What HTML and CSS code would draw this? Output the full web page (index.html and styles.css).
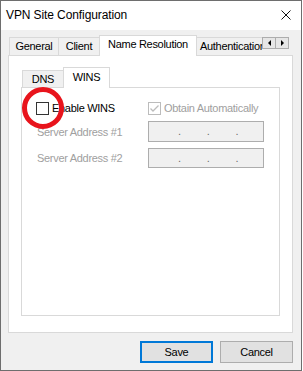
FILE: index.html
```html
<!DOCTYPE html>
<html lang="en">
<head>
    <meta charset="UTF-8">
    <title>VPN Site Configuration</title>
    <link rel="stylesheet" href="styles.css">
</head>
<body>
    <div class="window">
        <div class="titlebar">
            <span class="title">VPN Site Configuration</span>
            <svg class="close" width="10" height="10" viewBox="0 0 10 10">
                <path d="M0.5 0.5 L9.5 9.5 M9.5 0.5 L0.5 9.5" stroke="#111" stroke-width="1" fill="none"/>
            </svg>
        </div>
        <div class="content">
            <div class="tabs">
                <div class="tab tab-general">General</div>
                <div class="tab tab-client">Client</div>
                <div class="tab tab-name active">Name Resolution</div>
                <div class="tab tab-auth">Authentication</div>
                <div class="scroller">
                    <span class="arrow left"></span>
                    <span class="arrow right"></span>
                </div>
            </div>
            <div class="panel">
                <div class="subtabs">
                    <div class="subtab tab-dns">DNS</div>
                    <div class="subtab tab-wins active">WINS</div>
                </div>
                <div class="subpanel">
                    <div class="wins">
                        <label class="check">
                            <span class="box"></span>
                            <span>Enable WINS</span>
                        </label>
                        <label class="check disabled">
                            <span class="box">
                                <svg width="11" height="11" viewBox="0 0 11 11">
                                    <path d="M1.5 5.5 L4 8 L9.5 2.5" stroke="#bcbcbc" stroke-width="1.3" fill="none"/>
                                </svg>
                            </span>
                            <span>Obtain Automatically</span>
                        </label>
                        <span class="label">Server Address #1</span>
                        <div class="ip"><span>.</span><span>.</span><span>.</span></div>
                        <span class="label">Server Address #2</span>
                        <div class="ip"><span>.</span><span>.</span><span>.</span></div>
                    </div>
                    <div class="marker"></div>
                </div>
            </div>
            <div class="buttons">
                <button class="btn default">Save</button>
                <button class="btn">Cancel</button>
            </div>
        </div>
    </div>
</body>
</html>
```

FILE: styles.css
```css
body {
    margin: 0;
    font-family: "Liberation Sans", Arial, sans-serif;
    font-size: 11px;
    letter-spacing: -0.3px;
    color: #000;
    background: #fff;
}
.window {
    box-sizing: border-box;
    width: 302px;
    height: 371px;
    border: 1px solid #6e6e6e;
    background: #f0f0f0;
    display: flex;
    flex-direction: column;
}
.titlebar {
    height: 29px;
    background: #fff;
    display: flex;
    align-items: center;
    justify-content: space-between;
    padding: 0 10px 0 5px;
}
.title {
    font-size: 12px;
    letter-spacing: -0.1px;
    margin-top: -1px;
}
.close {
    margin-top: -1px;
}
.content {
    flex: 1;
    display: flex;
    flex-direction: column;
    padding: 5px 8px 7px 7px;
}
.tabs {
    display: flex;
    height: 20px;
    padding-left: 1px;
    position: relative;
    z-index: 1;
}
.tab {
    box-sizing: border-box;
    height: 18px;
    margin-top: 2px;
    border: 1px solid #d9d9d9;
    border-bottom: none;
    border-right: none;
    background: #f0f0f0;
    text-align: center;
    line-height: 17px;
    white-space: nowrap;
    overflow: hidden;
}
.tab-general { width: 49px; }
.tab-client { width: 41px; }
.tab-name { width: 98px; }
.tab-auth {
    width: 65px;
    text-align: left;
    padding-left: 3px;
}
.tab.active {
    height: 21px;
    margin-top: 0;
    background: #fff;
    border-right: 1px solid #d9d9d9;
    line-height: 17px;
}
.tab.active + .tab {
    border-left: none;
}
.scroller {
    display: flex;
    margin-top: 2px;
    height: 12px;
}
.arrow {
    box-sizing: border-box;
    width: 14px;
    height: 12px;
    border: 1px solid #adadad;
    background: #e6e6e6;
    display: flex;
    align-items: center;
    justify-content: center;
}
.arrow + .arrow {
    border-left: none;
    width: 13px;
}
.arrow.left::before {
    content: "";
    border-right: 3px solid #000;
    border-top: 3px solid transparent;
    border-bottom: 3px solid transparent;
}
.arrow.right::before {
    content: "";
    border-left: 3px solid #000;
    border-top: 3px solid transparent;
    border-bottom: 3px solid transparent;
}
.panel {
    flex: 1;
    background: #fff;
    border: 1px solid #d9d9d9;
    padding: 11px 12px 16px 12px;
    display: flex;
    flex-direction: column;
}
.subtabs {
    display: flex;
    height: 20px;
    padding-left: 1px;
    position: relative;
    z-index: 1;
}
.subtab {
    box-sizing: border-box;
    height: 17px;
    margin-top: 3px;
    border: 1px solid #d9d9d9;
    border-bottom: none;
    background: #f0f0f0;
    text-align: center;
    line-height: 17px;
}
.tab-dns {
    width: 41px;
    border-right: none;
}
.tab-wins { width: 47px; }
.subtab.active {
    height: 21px;
    margin-top: 0;
    background: #fff;
    line-height: 18px;
}
.subpanel {
    flex: 1;
    border: 1px solid #d9d9d9;
    position: relative;
}
.wins {
    display: grid;
    grid-template-columns: 112px 116px;
    grid-template-rows: 13px 21px 20px;
    row-gap: 6px;
    align-items: center;
    padding: 14px 0 0 14px;
}
.check {
    display: flex;
    align-items: center;
    gap: 3px;
    line-height: 13px;
    white-space: nowrap;
}
.box {
    box-sizing: border-box;
    width: 13px;
    height: 13px;
    border: 1px solid #333;
    background: #fff;
    display: flex;
    align-items: center;
    justify-content: center;
}
.disabled {
    color: #a0a0a0;
}
.disabled .box {
    border-color: #bcbcbc;
}
.label {
    color: #a0a0a0;
    padding-left: 1px;
}
.ip {
    box-sizing: border-box;
    height: 100%;
    border: 1px solid #adadad;
    background: #f0f0f0;
    color: #6d6d6d;
    display: flex;
    gap: 26px;
    padding-left: 29px;
    line-height: 19px;
}
.marker {
    position: absolute;
    left: 0;
    top: -1px;
    width: 42px;
    height: 42px;
    box-sizing: border-box;
    border: 5px solid #e8141c;
    border-radius: 50%;
}
.buttons {
    display: flex;
    justify-content: flex-end;
    gap: 7px;
    margin-top: 8px;
}
.btn {
    box-sizing: border-box;
    width: 73px;
    height: 22px;
    font-family: inherit;
    font-size: 11px;
    letter-spacing: -0.3px;
    background: #e1e1e1;
    border: 1px solid #adadad;
    padding: 0;
}
.btn.default {
    border: 2px solid #0078d7;
}
```
